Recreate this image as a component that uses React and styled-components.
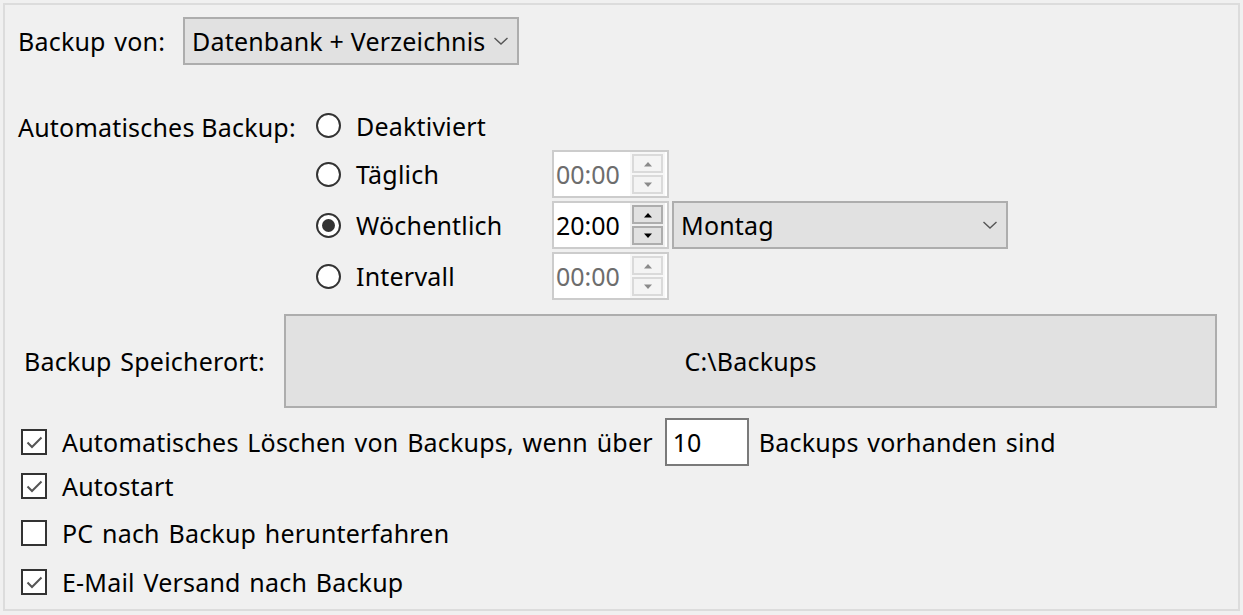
import React from 'react';
import styled, { createGlobalStyle } from 'styled-components';

const GlobalStyle = createGlobalStyle`
  html, body {
    margin: 0;
    padding: 0;
    background: #f0f0f0;
  }
  body {
    font-family: "Noto Sans", "Open Sans", sans-serif;
    font-size: 25px;
    letter-spacing: 0.2px;
    word-spacing: 2px;
    color: #000;
  }
`;

const Frame = styled.div`
  box-sizing: border-box;
  margin: 3px;
  width: 1237px;
  height: 608px;
  border: 2px solid #dcdcdc;
  padding: 12px 21px 0 13px;
  display: flex;
  flex-direction: column;
`;

const Row = styled.div`
  display: flex;
  align-items: center;
  height: ${(p) => p.h || 48}px;
  margin-top: ${(p) => p.mt || 0}px;
`;

const Label = styled.span`
  box-sizing: border-box;
  white-space: nowrap;
  width: ${(p) => (p.w ? `${p.w}px` : 'auto')};
  padding-left: ${(p) => p.pl || 0}px;
  flex-shrink: 0;
`;

const Select = styled.div`
  box-sizing: border-box;
  width: ${(p) => p.w}px;
  height: ${(p) => p.h || 48}px;
  margin-left: ${(p) => p.ml || 0}px;
  background: #e1e1e1;
  border: 2px solid #adadad;
  display: flex;
  align-items: center;
  justify-content: space-between;
  padding: 0 8px 0 7px;
  word-spacing: 0;
`;

const Chevron = () => (
  <svg width="16" height="10" viewBox="0 0 16 10">
    <path d="M1.5 2 L8 8 L14.5 2" fill="none" stroke="#555" strokeWidth="1.4" />
  </svg>
);

const AutoSection = styled.div`
  display: flex;
  margin-top: 39px;
`;

const AutoLabel = styled.div`
  width: 298px;
  height: 46px;
  display: flex;
  align-items: center;
  flex-shrink: 0;
  word-spacing: 0;
`;

const RadioList = styled.div`
  display: flex;
  flex-direction: column;
  gap: 3px;
`;

const RadioRow = styled.div`
  display: flex;
  align-items: center;
  height: ${(p) => p.h || 48}px;
`;

const RadioCell = styled.div`
  width: 236px;
  display: flex;
  align-items: center;
  gap: 15px;
  flex-shrink: 0;
`;

const RadioCircle = styled.span`
  box-sizing: border-box;
  width: 25px;
  height: 25px;
  border-radius: 50%;
  border: 2px solid #333;
  background: #fff;
  display: flex;
  align-items: center;
  justify-content: center;
  &::after {
    content: '';
    display: ${(p) => (p.checked ? 'block' : 'none')};
    width: 13px;
    height: 13px;
    border-radius: 50%;
    background: #333;
  }
`;

const Spin = styled.div`
  box-sizing: border-box;
  width: 117px;
  height: 48px;
  background: #fff;
  border: 2px solid #cccccc;
  display: flex;
  align-items: center;
  justify-content: space-between;
  padding: 0 2px 0 2px;
  letter-spacing: 0;
  color: ${(p) => (p.disabled ? '#6d6d6d' : '#000')};
`;

const SpinButtons = styled.div`
  display: flex;
  flex-direction: column;
  gap: 2px;
  padding: 2px;
  background: ${(p) => (p.disabled ? '#f7f7f7' : '#f0f0f0')};
`;

const SpinButton = styled.div`
  box-sizing: border-box;
  width: 31px;
  height: 19px;
  background: ${(p) => (p.disabled ? '#f4f4f4' : '#e1e1e1')};
  border: 2px solid ${(p) => (p.disabled ? '#dadada' : '#adadad')};
  display: flex;
  align-items: center;
  justify-content: center;
`;

const Arrow = ({ up, disabled }) => (
  <svg width="10" height="6" viewBox="0 0 10 6">
    <path
      d={up ? 'M1 5.5 L5 1 L9 5.5 Z' : 'M1 0.5 L5 5 L9 0.5 Z'}
      fill={disabled ? '#8a8a8a' : '#000'}
    />
  </svg>
);

const PathButton = styled.div`
  box-sizing: border-box;
  flex: 1;
  height: 94px;
  background: #e1e1e1;
  border: 2px solid #adadad;
  display: flex;
  align-items: center;
  justify-content: center;
`;

const CheckRow = styled.div`
  display: flex;
  align-items: center;
  height: ${(p) => p.h}px;
  margin-top: ${(p) => p.mt || 0}px;
  padding-left: 3px;
`;

const CheckBox = styled.span`
  box-sizing: border-box;
  width: 26px;
  height: 26px;
  border: 2px solid #333;
  background: #fff;
  display: flex;
  align-items: center;
  justify-content: center;
  margin-right: 15px;
  flex-shrink: 0;
`;

const NumberInput = styled.div`
  box-sizing: border-box;
  width: 84px;
  height: 48px;
  background: #fff;
  border: 2px solid #7a7a7a;
  display: flex;
  align-items: center;
  padding-left: 6px;
  margin: 0 10px 0 12px;
  letter-spacing: 0;
`;

const Check = () => (
  <svg width="17" height="13" viewBox="0 0 17 13">
    <path d="M1.5 6.5 L6 11 L15.5 1.5" fill="none" stroke="#555" strokeWidth="2" />
  </svg>
);

const SpinBox = ({ value, disabled }) => (
  <Spin disabled={disabled}>
    <span>{value}</span>
    <SpinButtons disabled={disabled}>
      <SpinButton disabled={disabled}>
        <Arrow up disabled={disabled} />
      </SpinButton>
      <SpinButton disabled={disabled}>
        <Arrow disabled={disabled} />
      </SpinButton>
    </SpinButtons>
  </Spin>
);

const Radio = ({ label, checked }) => (
  <RadioCell>
    <RadioCircle checked={checked} />
    <span>{label}</span>
  </RadioCell>
);

const Option = ({ checked, children, h, mt }) => (
  <CheckRow h={h} mt={mt}>
    <CheckBox>{checked && <Check />}</CheckBox>
    {children}
  </CheckRow>
);

const App = () => {
  return (
    <>
      <GlobalStyle />
      <Frame>
        <Row>
          <Label w={165}>Backup von:</Label>
          <Select w={336}>
            <span>Datenbank + Verzeichnis</span>
            <Chevron />
          </Select>
        </Row>

        <AutoSection>
          <AutoLabel>Automatisches Backup:</AutoLabel>
          <RadioList>
            <RadioRow h={43}>
              <Radio label="Deaktiviert" />
            </RadioRow>
            <RadioRow>
              <Radio label="Täglich" />
              <SpinBox value="00:00" disabled />
            </RadioRow>
            <RadioRow>
              <Radio label="Wöchentlich" checked />
              <SpinBox value="20:00" />
              <Select w={336} ml={3}>
                <span>Montag</span>
                <Chevron />
              </Select>
            </RadioRow>
            <RadioRow>
              <Radio label="Intervall" />
              <SpinBox value="00:00" disabled />
            </RadioRow>
          </RadioList>
        </AutoSection>

        <Row h={94} mt={14}>
          <Label w={266} pl={6}>Backup Speicherort:</Label>
          <PathButton>C:\Backups</PathButton>
        </Row>

        <Option checked h={48} mt={10}>
          <span>Automatisches Löschen von Backups, wenn über</span>
          <NumberInput>10</NumberInput>
          <span>Backups vorhanden sind</span>
        </Option>
        <Option checked h={40}>
          <span>Autostart</span>
        </Option>
        <Option h={54}>
          <span>PC nach Backup herunterfahren</span>
        </Option>
        <Option checked h={44}>
          <span>E-Mail Versand nach Backup</span>
        </Option>
      </Frame>
    </>
  );
};

export default App;
